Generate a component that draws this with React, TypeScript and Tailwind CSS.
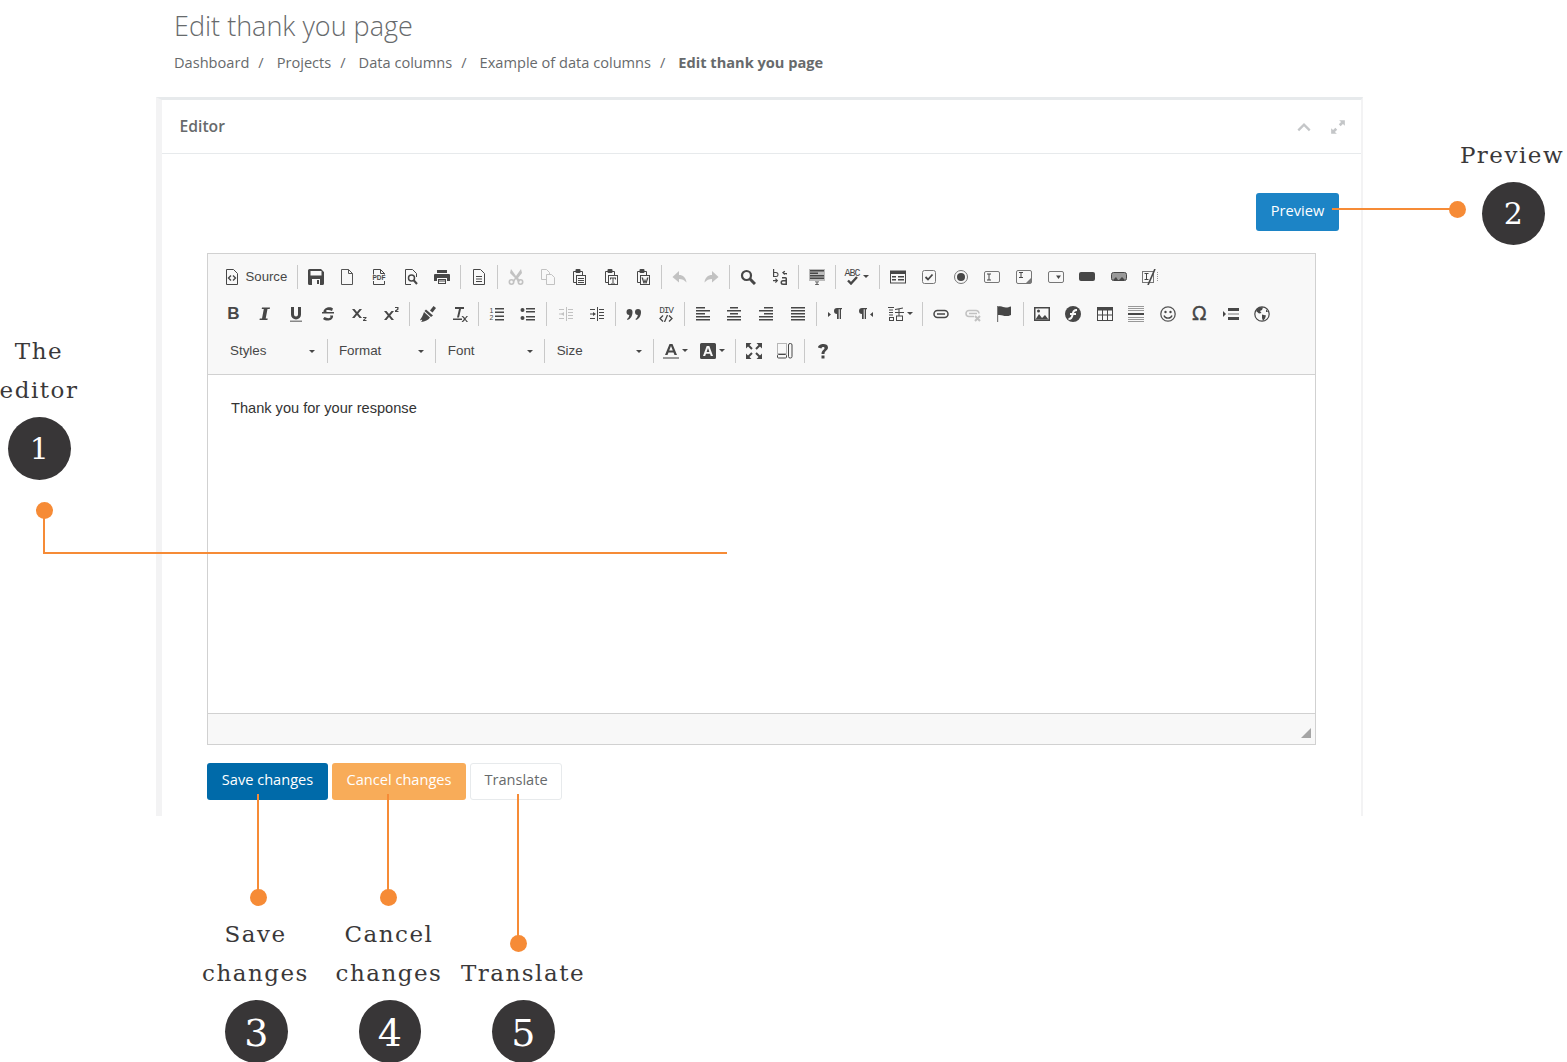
import { Fragment } from "react"
import type { ReactNode } from "react"

const Ico = ({ children, dim }: { children: ReactNode; dim?: boolean }) => (
  <svg width="16" height="16" viewBox="0 0 16 16" fill="#474747" className={dim ? "opacity-30" : ""}>
    {children}
  </svg>
)

const Page = () => <path d="M2.5 .5h7l4 4v11h-11z" fill="none" stroke="#474747" />
const Clip = () => (
  <>
    <path d="M5 2.5H2.5v11H5" fill="none" stroke="#474747" />
    <path d="M9 2.5h2.5V7" fill="none" stroke="#474747" />
    <rect x="4.5" y="0" width="5" height="4" rx="1" />
    <rect x="5.5" y="6.5" width="9" height="9" fill="#f8f8f8" stroke="#474747" />
  </>
)

const icons: Record<string, ReactNode> = {
  source: (
    <Ico>
      <Page />
      <path d="M7 6.5 4.5 9 7 11.5M9 6.5l2.5 2.5L9 11.5" fill="none" stroke="#474747" strokeWidth="1.4" />
    </Ico>
  ),
  save: (
    <Ico>
      <path d="M1.5 0h11.5L16 3v11.5a1.5 1.5 0 0 1-1.5 1.5h-13A1.5 1.5 0 0 1 0 14.5v-13A1.5 1.5 0 0 1 1.5 0z" />
      <rect x="2.5" y="2" width="11" height="4.5" fill="#f8f8f8" />
      <rect x="4" y="10" width="8" height="6" fill="#f8f8f8" />
      <rect x="9" y="11" width="2" height="4" />
    </Ico>
  ),
  newpage: (
    <Ico>
      <path d="M2.5.5h7l4 4v11h-11z" fill="none" stroke="#555" />
      <path d="M9.5.5v4h4" fill="none" stroke="#555" />
    </Ico>
  ),
  pdf: (
    <Ico>
      <Page />
      <path d="M9.5.5v4h4" fill="none" stroke="#474747" />
      <rect x="0" y="5.5" width="16" height="6.5" fill="#f8f8f8" />
      <text x="8" y="11" fontSize="6.5" fontWeight="700" textAnchor="middle" fontFamily="'Liberation Sans', sans-serif">PDF</text>
    </Ico>
  ),
  preview: (
    <Ico>
      <path d="M8 15.5H2.5V.5h7l4 4V8" fill="none" stroke="#474747" />
      <circle cx="8.5" cy="9" r="3" fill="none" stroke="#474747" strokeWidth="1.5" />
      <path d="m10.5 11 3.5 4" stroke="#474747" strokeWidth="2" />
    </Ico>
  ),
  print: (
    <Ico>
      <rect x="3" y="1" width="10" height="3" />
      <path d="M1 5h14a1 1 0 0 1 1 1v6h-3V9H3v3H0V6a1 1 0 0 1 1-1z" />
      <path d="M4 10h8v5H4z" />
      <path d="M5 11.5h6v1H5zM5 13h6v1H5z" fill="#f8f8f8" />
    </Ico>
  ),
  templates: (
    <Ico>
      <Page />
      <path d="M5 7h6v1H5zM5 9.5h6v1H5zM5 12h6v1H5z" />
    </Ico>
  ),
  cut: (
    <Ico dim>
      <path d="m3 0 5 7 5-7 1 4-4 5 1 1 1.5 2L10 13 8 10l-2 3-1.5-1L6 10l1-1-5-5z" />
      <circle cx="3.5" cy="13" r="2.2" fill="none" stroke="#474747" strokeWidth="1.6" />
      <circle cx="12.5" cy="13" r="2.2" fill="none" stroke="#474747" strokeWidth="1.6" />
    </Ico>
  ),
  copy: (
    <Ico dim>
      <path d="M1.5.5h5l3 3v7h-8z" fill="none" stroke="#474747" />
      <path d="M6.5 5.5h5l3 3v7h-8z" fill="#f8f8f8" stroke="#474747" />
    </Ico>
  ),
  paste: (
    <Ico>
      <Clip />
      <path d="M7 9h6v1H7zM7 11h6v1H7zM7 13h6v1H7z" />
    </Ico>
  ),
  pastetext: (
    <Ico>
      <Clip />
      <path d="M7 8.5h6v2h-1v-1h-1.5V14H12v.5H8V14h1.5V9.5H8v1H7z" />
    </Ico>
  ),
  pasteword: (
    <Ico>
      <Clip />
      <path d="M6.5 8.5H8l1 4 1-3 1 3 1-4h1.5l-2 6h-1l-.5-2-.5 2h-1z" />
    </Ico>
  ),
  undo: (
    <Ico dim>
      <path d="M7 2 .5 8 7 13.5V10c3 0 5.5 1 7.5 3.5C14 8.5 11 6 7 6z" />
    </Ico>
  ),
  redo: (
    <Ico dim>
      <path d="M9 2l6.5 6L9 13.5V10c-3 0-5.5 1-7.5 3.5C2 8.5 5 6 9 6z" />
    </Ico>
  ),
  find: (
    <Ico>
      <circle cx="6.5" cy="6.5" r="4.5" fill="none" stroke="#474747" strokeWidth="2.2" />
      <path d="m10 10 5 5" stroke="#474747" strokeWidth="3" />
    </Ico>
  ),
  replace: (
    <Ico>
      <path d="M1 0h1.2v3H4a2.5 2.5 0 0 1 0 5H1zm1.2 4v3H4a1.5 1.5 0 0 0 0-3z" />
      <path d="M15 5.5V4h-3l1.2-1.5-.8-.8L10 3.5l2.4 2.4.8-.8L12 5z" />
      <path d="M1 11h3l-1-1 .8-.8L6.2 11.6 3.8 14 3 13.2l1-1H1z" />
      <path d="M10 8h3.5A1.5 1.5 0 0 1 15 9.5V16h-4a2.5 2.5 0 0 1 0-5h2.5V9.5H10zm1 4.5a1 1 0 0 0 0 2h2.5v-2z" />
    </Ico>
  ),
  selectall: (
    <Ico>
      <rect x="0" y="0" width="16" height="12" fill="#bbb" />
      <path d="M1 1h14v1.5H1zM1 3.5h8V5H1zM1 6h14v1.5H1zM1 8.500h14V10H1z" />
      <path d="M6 12.500h4v.8H8.500v2H10v.7H6v-.7h1.500v-2H6z" />
    </Ico>
  ),
  spell: (
    <span className="relative block size-4">
      <span className="absolute left-0 top-0 font-['Liberation_Mono',monospace] text-[10px] leading-[9px] tracking-[-1px] text-[#474747]">ABC</span>
      <svg className="absolute left-0 top-0" width="16" height="16" viewBox="0 0 16 16">
        <path d="m4 11.5 3 3 6-6.5" fill="none" stroke="#474747" strokeWidth="2.4" />
      </svg>
    </span>
  ),
  form: (
    <Ico>
      <path d="M0 1.500h16v13H0z" />
      <path d="M1 5h14v8.500H1z" fill="#f8f8f8" />
      <path d="M2 7h4v1.500H2zM2 10h4v1.500H2zM8 7h6v1.500H8zM8 10h6v1.500H8z" />
    </Ico>
  ),
  checkbox: (
    <Ico>
      <rect x="1.500" y="1.500" width="13" height="13" rx="2" fill="none" stroke="#777" />
      <path d="m4.500 8 2.500 2.500L11.500 5.500" fill="none" stroke="#474747" strokeWidth="1.800" />
    </Ico>
  ),
  radio: (
    <Ico>
      <circle cx="8" cy="8" r="6.500" fill="none" stroke="#777" />
      <circle cx="8" cy="8" r="4" />
    </Ico>
  ),
  textfield: (
    <Ico>
      <rect x=".5" y="2.500" width="15" height="11" rx="1.500" fill="none" stroke="#777" />
      <path d="M3 4.500h4v1H5.500v5H7v1H3v-1h1.500v-5H3z" />
    </Ico>
  ),
  textarea: (
    <Ico>
      <rect x=".5" y="1.500" width="15" height="13" rx="1.500" fill="none" stroke="#777" />
      <path d="M3 3h4v1H5.500v4H7v1H3V8h1.500V4H3z" />
      <path d="M15 9v5h-5z" fill="#777" />
    </Ico>
  ),
  select: (
    <Ico>
      <rect x=".5" y="2.500" width="15" height="11" rx="1.500" fill="none" stroke="#777" />
      <path d="M8 6.500h5L10.500 10z" />
    </Ico>
  ),
  button: (
    <Ico>
      <rect x="0" y="3" width="16" height="9" rx="2" />
    </Ico>
  ),
  imagebutton: (
    <Ico>
      <rect x=".5" y="3.500" width="15" height="8" rx="2" fill="#999" stroke="#474747" />
      <path d="M2 11l3-3 2 3zM8 11l3-3 3 3z" />
    </Ico>
  ),
  hidden: (
    <Ico>
      <rect x=".5" y="2.500" width="11" height="11" fill="none" stroke="#777" />
      <path d="M2.500 4h4v1H5v5h1.500v1h-4v-1H4V5H2.500z" />
      <path d="M13 0 6 16" stroke="#474747" strokeWidth="1.600" />
      <path d="M15.500 3v10" stroke="#999" strokeDasharray="1 1" />
    </Ico>
  ),
  bold: <span className="font-['Liberation_Sans',sans-serif] text-[17px] font-bold leading-none text-[#474747]">B</span>,
  italic: (
    <Ico>
      <path d="M5 1.500h8l-.3 1.500h-2.200L8.700 12.500h2l-.3 1.500H2.500l.3-1.500h2.200L6.800 3H4.700z" />
    </Ico>
  ),
  underline: (
    <Ico>
      <path d="M3 1h3v7.500a2 2 0 0 0 4 0V1h3v7.500a5 5 0 0 1-10 0z" />
      <rect x="2" y="14.500" width="12" height="1.500" fill="#888" />
    </Ico>
  ),
  strike: (
    <Ico>
      <path d="M13 2.500 12 5c-2.500-1.500-6-1.500-6 0 0 .5.5.8 1.500 1H14v1.500H2V6h1.500C3 2 10-.5 13 2.500zM4.500 11c2.500 1.500 6 1.500 6 0l-.5-1.500h3c.8 5-6.500 6.500-10 3.500z" />
    </Ico>
  ),
  sub: (
    <Ico>
      <path d="m1 3 2.500 0L6 6l2.500-3H11L7.300 7.500 11 12H8.500L6 9l-2.500 3H1l3.700-4.500z" />
      <path d="M12 11h3.500v1L13.500 14h2v1H12v-1l2.200-2H12z" />
    </Ico>
  ),
  sup: (
    <Ico>
      <path d="m1 5 2.500 0L6 8l2.500-3H11L7.300 9.500 11 14H8.500L6 11l-2.500 3H1l3.700-4.500z" />
      <path d="M12 1h3.500v2.500L13.500 5h2v1H12V4.500l2.200-1.500V2H12z" />
    </Ico>
  ),
  brush: (
    <Ico>
      <path d="M10 4.500 13.500 0 16 2l-3.500 4.500z" />
      <path d="M6 3.500l7 6-2 1.500-6.500-6z" />
      <path d="M4 6 10 11.500C8.500 14 5 15.500 1 16c1-1 1.500-2 1-2.500-.5.5-1.500 1-2 .5C1.500 12 3 9 4 6z" />
    </Ico>
  ),
  clearformat: (
    <Ico>
      <path d="M3 1h9v2h-3L7 11.500H5L7 3H3z" />
      <rect x="1" y="12.500" width="9" height="1.500" />
      <path d="m11 10 2 2 1.500-2h1.500l-2.500 3 2.500 3h-1.500L13 14l-2 2H9.500l2.500-3-2.500-3z" />
    </Ico>
  ),
  ol: (
    <Ico>
      <text x="2.5" y="6.500" fontSize="7" textAnchor="middle" fontFamily="'Liberation Sans', sans-serif">1</text>
      <text x="2.5" y="14" fontSize="7" textAnchor="middle" fontFamily="'Liberation Sans', sans-serif">2</text>
      <path d="M6 2h9v1.500H6zM6 5.500h9V7H6zM6 9.500h9V11H6zM6 13h9v1.500H6z" />
    </Ico>
  ),
  ul: (
    <Ico>
      <circle cx="2.500" cy="4" r="2" />
      <circle cx="2.500" cy="12" r="2" />
      <path d="M6 2h9v1.500H6zM6 5h9v1.500H6zM6 10h9v1.500H6zM6 13h9v1.500H6z" />
    </Ico>
  ),
  outdent: (
    <Ico dim>
      <path d="M8 1h1v14H8zM10 3h5v1h-5zM10 6h5v1h-5zM10 9h5v1h-5zM10 12h5v1h-5zM1 3h5v1H1zM1 12h5v1H1zM3 8l3-2v4z" />
      <path d="M1 7.500h3v1H1z" />
    </Ico>
  ),
  indent: (
    <Ico>
      <path d="M8 1h1v14H8zM10 3h5v1h-5zM10 6h5v1h-5zM10 9h5v1h-5zM10 12h5v1h-5zM1 3h5v1H1zM1 12h5v1H1zM7 8 4 6v4z" />
      <path d="M1 7.500h3v1H1z" />
    </Ico>
  ),
  quote: (
    <Ico>
      <path d="M.5 6a3 3 0 1 1 6 0c0 4-2 7-5 8l-.5-1c1.500-1 2.200-2.500 2.300-4A3 3 0 0 1 .5 6zM9 6a3 3 0 1 1 6 0c0 4-2 7-5 8l-.5-1c1.500-1 2.200-2.500 2.300-4A3 3 0 0 1 9 6z" />
    </Ico>
  ),
  div: (
    <span className="relative block size-4">
      <span className="absolute left-[1.5px] top-0 font-['Liberation_Mono',monospace] text-[9.5px] leading-[9px] tracking-[-1.2px] text-[#474747]">DIV</span>
      <svg className="absolute left-0 top-0" width="16" height="16" viewBox="0 0 16 16">
        <path d="M5 9.5 2 12.500l3 3M11 9.500l3 3-3 3M9.500 9 6.500 16" fill="none" stroke="#474747" strokeWidth="1.300" />
      </svg>
    </span>
  ),
  left: (
    <Ico>
      <path d="M1 1h9v1.500H1zM1 4h14v1.500H1zM1 7h9v1.500H1zM1 10h14v1.500H1zM1 13h14v1.500H1z" />
    </Ico>
  ),
  center: (
    <Ico>
      <path d="M4 1h8v1.500H4zM1 4h14v1.500H1zM4 7h8v1.500H4zM1 10h14v1.500H1zM1 13h14v1.500H1z" />
    </Ico>
  ),
  right: (
    <Ico>
      <path d="M6 1h9v1.500H6zM1 4h14v1.500H1zM6 7h9v1.500H6zM1 10h14v1.500H1zM1 13h14v1.500H1z" />
    </Ico>
  ),
  justify: (
    <Ico>
      <path d="M1 1h14v1.500H1zM1 4h14v1.500H1zM1 7h14v1.500H1zM1 10h14v1.500H1zM1 13h14v1.500H1z" />
    </Ico>
  ),
  ltr: (
    <Ico>
      <path d="M1 6l3 2.500L1 11z" />
      <path d="M10 2h5v1.300h-1V13h-1.300V3.300h-1V13H10V8a3 3 0 0 1 0-6z" />
    </Ico>
  ),
  rtl: (
    <Ico>
      <path d="M15 6l-3 2.500 3 2.500z" />
      <path d="M4 2h5v1.300H8V13H6.700V3.300h-1V13H4V8a3 3 0 0 1 0-6z" />
    </Ico>
  ),
  lang: (
    <Ico>
      <path d="M0 1h6v1H0zM1 3.500h4v1H1zM1 6h4v1H1zM1 8.500h4v1H1zM1 11h5v4H1zm1 1v2h3v-2zM7 3l8-1.500v1l-3.500.7V6H16v1h-4.500v2.500H15V15H8V9.500h2.500V7H7V6h3.500V3.400L7 4zm2 7.500v3.500h5v-3.500z" />
    </Ico>
  ),
  link: (
    <Ico>
      <path d="M4.500 4.500h7a3.500 3.500 0 0 1 0 7h-7a3.500 3.500 0 0 1 0-7z" fill="none" stroke="#474747" strokeWidth="1.500" />
      <path d="M4 8h8" stroke="#474747" strokeWidth="1.500" />
    </Ico>
  ),
  unlink: (
    <Ico dim>
      <path d="M9 10.500H4a3 3 0 0 1 0-6h7a3 3 0 0 1 3 3" fill="none" stroke="#474747" strokeWidth="1.500" />
      <path d="M4 7.500h8" stroke="#474747" strokeWidth="1.500" />
      <path d="m10 10 5 5M15 10l-5 5" stroke="#474747" strokeWidth="2" />
    </Ico>
  ),
  anchor: (
    <Ico>
      <rect x="1" y="0" width="1.200" height="16" fill="#777" />
      <path d="M2 .5c4-1 5 1 8 1 2 0 3-.5 5-1V9c-2 1-3 1-5 1-3 0-4-1.500-8-1z" />
    </Ico>
  ),
  image: (
    <Ico>
      <path d="M0 1h16v14H0z" />
      <path d="M1.500 2.500h13v11h-13z" fill="#f8f8f8" />
      <path d="M1.500 13.500 5 8l3 4 3-3 3.500 4.500z" />
      <circle cx="4.500" cy="5" r="1.500" />
    </Ico>
  ),
  flash: (
    <Ico>
      <circle cx="8" cy="8" r="8" />
      <path d="M12 3c-3.500 0-4.500 2-5 4H5v2h1.500C6 11 5 12 3.500 12v2c3 0 4.500-2 5-5H11V7H9c.3-1.200 1.500-2 3-2z" fill="#f8f8f8" />
    </Ico>
  ),
  table: (
    <Ico>
      <path d="M0 1h16v14H0z" />
      <path d="M1 4.500h4v4H1zM6 4.500h4v4H6zM11 4.500h4v4h-4zM1 9.500h4V14H1zM6 9.500h4V14H6zM11 9.500h4V14h-4z" fill="#f8f8f8" />
    </Ico>
  ),
  hr: (
    <Ico>
      <path d="M0 0h16v1H0zM0 2h16v1H0zM0 4h16v1H0zM0 11h16v1H0zM0 13h16v1H0zM0 15h16v1H0z" fill="#999" />
      <rect x="0" y="7" width="16" height="2" />
    </Ico>
  ),
  smiley: (
    <Ico>
      <circle cx="8" cy="8" r="7.200" fill="none" stroke="#555" strokeWidth="1.300" />
      <circle cx="5.500" cy="6" r="1.200" />
      <circle cx="10.500" cy="6" r="1.200" />
      <path d="M4 9.500c1 3.500 7 3.500 8 0" fill="none" stroke="#474747" strokeWidth="1.300" />
    </Ico>
  ),
  char: <span className="font-['DejaVu_Sans',sans-serif] text-[19px] leading-none text-[#474747] [-webkit-text-stroke:0.3px_#474747]">Ω</span>,
  pagebreak: (
    <Ico>
      <path d="M0 5l3 3-3 3z" />
      <path d="M5 2h11v3H5zM5 11h11v3H5z" />
      <path d="M5 7.500h11v1H5z" fill="#777" />
    </Ico>
  ),
  iframe: (
    <Ico>
      <circle cx="8" cy="8" r="7.200" fill="none" stroke="#474747" strokeWidth="1.200" />
      <path d="M3 3c2-1.500 4-2 6-1.500L8 4 6 5 7.500 7 5 7.500 2 5zM8 8.500l4 1-1 3-2 2.500-1-3zM12 3l2 3-2 0z" />
    </Ico>
  ),
  maximize: (
    <Ico>
      <path d="M0 0h5.500L0 5.500zM16 0v5.500L10.500 0zM0 16v-5.500L5.500 16zM16 16h-5.500L16 10.500z" />
      <path d="M2 2l4 4M14 2l-4 4M2 14l4-4M14 14l-4-4" stroke="#474747" strokeWidth="2" />
    </Ico>
  ),
  blocks: (
    <Ico>
      <path d="M.5.500h9v10h-9z" fill="none" stroke="#777" strokeDasharray="1 1" />
      <rect x=".5" y="11.500" width="9" height="3.500" rx="1" fill="none" stroke="#474747" />
      <rect x="11.500" y=".5" width="3.500" height="14.500" rx="1.500" fill="none" stroke="#474747" />
    </Ico>
  ),
  help: (
    <Ico>
      <path d="M3 4.500C3 .5 13-.5 13 4.500c0 3-3.500 3-3.500 6.500h-3c0-3.800 3-4 3-6 0-1.500-3-1.500-3 .5z" />
      <rect x="6.500" y="12.500" width="3" height="3" />
    </Ico>
  ),
}

const Sep = () => (
  <span className="flex h-[24px] w-[5.6px] shrink-0 justify-center">
    <span className="h-full w-px bg-[#c9c9c9]" />
  </span>
)

const Btn = ({ name }: { name: string }) => (
  <span className="flex h-[37px] w-[31.55px] shrink-0 items-center justify-center">{icons[name]}</span>
)

const Caret = () => <span className="h-0 w-0 border-x-[3px] border-t-[3px] border-x-transparent border-t-[#474747]" />

const Combo = ({ label }: { label: string }) => (
  <span className="flex h-[37px] w-[103.3px] shrink-0 items-center justify-between pl-[9px] pr-[9px] pt-[1px] text-[13.4px] text-[#474747]">
    {label}
    <Caret />
  </span>
)

const row1 = [
  ["save", "newpage", "pdf", "preview", "print"],
  ["templates"],
  ["cut", "copy", "paste", "pastetext", "pasteword"],
  ["undo", "redo"],
  ["find", "replace"],
  ["selectall"],
]
const row1b = ["form", "checkbox", "radio", "textfield", "textarea", "select", "button", "imagebutton", "hidden"]
const row2 = [
  ["bold", "italic", "underline", "strike", "sub", "sup"],
  ["brush", "clearformat"],
  ["ol", "ul"],
  ["outdent", "indent"],
  ["quote", "div"],
  ["left", "center", "right", "justify"],
]
const row2b = ["link", "unlink", "anchor"]
const row2c = ["image", "flash", "table", "hr", "smiley", "char", "pagebreak", "iframe"]

const Toolbar = () => (
  <div className="h-[121px] border-b border-[#d1d1d1] bg-[#f8f8f8] pl-[8.5px] pt-[4px]">
    <div className="flex items-center">
      <span className="flex h-[37px] w-[78px] shrink-0 items-center gap-[6px] pl-[7px] text-[13.2px] text-[#474747]">
        {icons.source}<span className="pt-[1px]">Source</span>
      </span>
      {row1.map((group) => (
        <Fragment key={group[0]}>
          <Sep />
          {group.map((n) => <Btn key={n} name={n} />)}
        </Fragment>
      ))}
      <Sep />
      <span className="flex h-[37px] w-[38px] shrink-0 items-center gap-[3px] pl-[6px]">
        {icons.spell}
        <Caret />
      </span>
      <Sep />
      {row1b.map((n) => <Btn key={n} name={n} />)}
    </div>
    <div className="flex items-center pl-[1px]">
      {row2.map((group, i) => (
        <Fragment key={group[0]}>
          {i > 0 && <Sep />}
          {group.map((n) => <Btn key={n} name={n} />)}
        </Fragment>
      ))}
      <Sep />
      <Btn name="ltr" />
      <Btn name="rtl" />
      <span className="flex h-[37px] w-[38px] shrink-0 items-center gap-[3px] pl-[6px]">
        {icons.lang}
        <Caret />
      </span>
      <Sep />
      {row2b.map((n) => <Btn key={n} name={n} />)}
      <Sep />
      {row2c.map((n) => <Btn key={n} name={n} />)}
    </div>
    <div className="flex items-center pl-[4.5px]">
      <Combo label="Styles" />
      <Sep />
      <Combo label="Format" />
      <Sep />
      <Combo label="Font" />
      <Sep />
      <Combo label="Size" />
      <Sep />
      <span className="flex h-[37px] w-[38px] shrink-0 items-center gap-[3px] pl-[6px]">
        <svg width="16" height="16" viewBox="0 0 16 16" fill="#474747">
          <path d="M6.500 1h3L14 12h-2.500l-1-2.500h-5L4.500 12H2zm-.3 6.500h3.600L8 3z" />
          <rect x="0" y="14" width="16" height="2" fill="#999" />
        </svg>
        <Caret />
      </span>
      <span className="flex h-[37px] w-[38px] shrink-0 items-center gap-[3px] pl-[5px]">
        <svg width="16" height="16" viewBox="0 0 16 16" fill="#474747">
          <path d="M1.500 0h13A1.500 1.500 0 0 1 16 1.500v13a1.500 1.500 0 0 1-1.500 1.500h-13A1.500 1.500 0 0 1 0 14.500v-13A1.500 1.500 0 0 1 1.500 0z" />
          <path d="M6.700 3h2.600L13 13h-2.200l-.8-2.200H6L5.200 13H3zm-.1 6h2.800L8 5z" fill="#f8f8f8" />
        </svg>
        <Caret />
      </span>
      <Sep />
      <Btn name="maximize" />
      <Btn name="blocks" />
      <Sep />
      <Btn name="help" />
    </div>
  </div>
)

const crumbs = ["Dashboard", "Projects", "Data columns", "Example of data columns"]

const Circle = ({ n, className }: { n: number; className: string }) => (
  <div className={`absolute flex size-[62.5px] items-center justify-center rounded-full bg-[#383637] font-['DejaVu_Serif',serif] text-white ${className}`}>
    {n}
  </div>
)

const Dot = ({ className }: { className: string }) => (
  <div className={`absolute size-[17px] rounded-full bg-[#f68b36] ${className}`} />
)

const Label = ({ children, className }: { children: ReactNode; className: string }) => (
  <div className={`absolute w-[140px] text-center font-['DejaVu_Serif',serif] text-[23px] leading-[39px] tracking-[1.5px] text-[#3a3839] ${className}`}>
    {children}
  </div>
)

export default function App() {
  return (
    <div className="relative h-[1062px] w-[1567px] overflow-hidden bg-white font-['Open_Sans',sans-serif] text-[#676a6c]">
      {/* Page heading */}
      <div className="h-[97px] pl-[174px] pt-[6px]">
        <h2 className="text-[27px] font-light leading-[40px] text-[#676a6c]">Edit thank you page</h2>
        <ol className="mt-[6px] flex text-[14.6px] leading-[20px]">
          {crumbs.map((c) => (
            <li key={c} className="flex">
              {c}
              <span className="ml-[9px] mr-[13px]">/</span>
            </li>
          ))}
          <li className="font-bold">Edit thank you page</li>
        </ol>
      </div>

      {/* Card */}
      <div className="ml-[156px] h-[719px] w-[1207px] border-l-[6px] border-r-2 border-t-[3px] border-l-[#f3f3f4] border-r-[#f3f3f4] border-t-[#e7eaec]">
        <div className="flex h-[54px] items-center justify-between border-b border-[#e7eaec] pl-[17.5px] pr-[15px]">
          <h5 className="text-[15.7px] font-semibold text-[#676a6c]">Editor</h5>
          <div className="flex items-center gap-[18px]">
            <svg width="16" height="16" viewBox="0 0 14 14" fill="none" stroke="#c4c6c8" strokeWidth="2">
              <path d="m2 10 5-5 5 5" />
            </svg>
            <svg width="16" height="16" viewBox="0 0 14 14" fill="#c4c6c8">
              <path d="M8 1h5v5l-1.700-1.700-2 2-1.600-1.600 2-2zM1 13V8l1.700 1.700 2-2 1.600 1.600-2 2L6 13z" />
            </svg>
          </div>
        </div>
        <div className="px-[22px] pb-[16px] pt-[39px]">
          <div className="flex justify-end">
            <button className="h-[38px] w-[83px] rounded-[3px] bg-[#1c84c6] pb-[3px] text-[14.6px] text-white">Preview</button>
          </div>
          <div className="mx-[23px] mt-[22px] h-[492px] border border-[#d1d1d1] font-['Liberation_Sans',sans-serif]">
            <Toolbar />
            <div className="h-[338px] bg-white pl-[23px] pt-[23px] text-[14.6px] leading-[20px] text-[#333]">
              Thank you for your response
            </div>
            <div className="relative h-[31px] border-t border-[#d1d1d1] bg-[#f8f8f8]">
              <svg className="absolute bottom-[6px] right-[4px]" width="10" height="10" viewBox="0 0 10 10" fill="#a5a5a5">
                <path d="M10 0v10H0z" />
              </svg>
            </div>
          </div>
          <div className="mx-[23px] mt-[18px] flex gap-[4px] text-[14.6px]">
            <button className="h-[37px] w-[121px] rounded-[3px] bg-[#006aa9] pb-[3px] text-white">Save changes</button>
            <button className="h-[37px] w-[134px] rounded-[3px] bg-[#f8ac59] pb-[3px] text-white">Cancel changes</button>
            <button className="h-[37px] w-[92px] rounded-[3px] border border-[#e7eaec] bg-white pb-[3px] text-[#676a6c]">Translate</button>
          </div>
        </div>
      </div>

      {/* Annotations */}
      <Label className="left-[-31px] top-[332px]">The<br />editor</Label>
      <Circle n={1} className="left-[8px] top-[417px] text-[30px]" />
      <div className="absolute left-[43px] top-[510px] h-[44px] w-[2px] bg-[#f68b36]" />
      <div className="absolute left-[43px] top-[552px] h-[2px] w-[684px] bg-[#f68b36]" />
      <Dot className="left-[36px] top-[502px]" />

      <Label className="left-[1442px] top-[136px]">Preview</Label>
      <Circle n={2} className="left-[1482px] top-[182px] text-[30px]" />
      <div className="absolute left-[1332px] top-[208px] h-[2px] w-[125px] bg-[#f68b36]" />
      <Dot className="left-[1449px] top-[201px]" />

      <div className="absolute left-[257px] top-[794px] h-[104px] w-[2px] bg-[#f68b36]" />
      <Dot className="left-[249.5px] top-[889px]" />
      <Label className="left-[185.5px] top-[915px]">Save<br />changes</Label>
      <Circle n={3} className="left-[225px] top-[1000px] pt-[5px] text-[38px]" />

      <div className="absolute left-[387px] top-[794px] h-[104px] w-[2px] bg-[#f68b36]" />
      <Dot className="left-[379.5px] top-[889px]" />
      <Label className="left-[319px] top-[915px]">Cancel<br />changes</Label>
      <Circle n={4} className="left-[358.5px] top-[1000px] pt-[5px] text-[38px]" />

      <div className="absolute left-[517px] top-[794px] h-[150px] w-[2px] bg-[#f68b36]" />
      <Dot className="left-[509.5px] top-[935px]" />
      <Label className="left-[453px] top-[954px]">Translate</Label>
      <Circle n={5} className="left-[492px] top-[1000px] pt-[5px] text-[38px]" />
    </div>
  )
}
